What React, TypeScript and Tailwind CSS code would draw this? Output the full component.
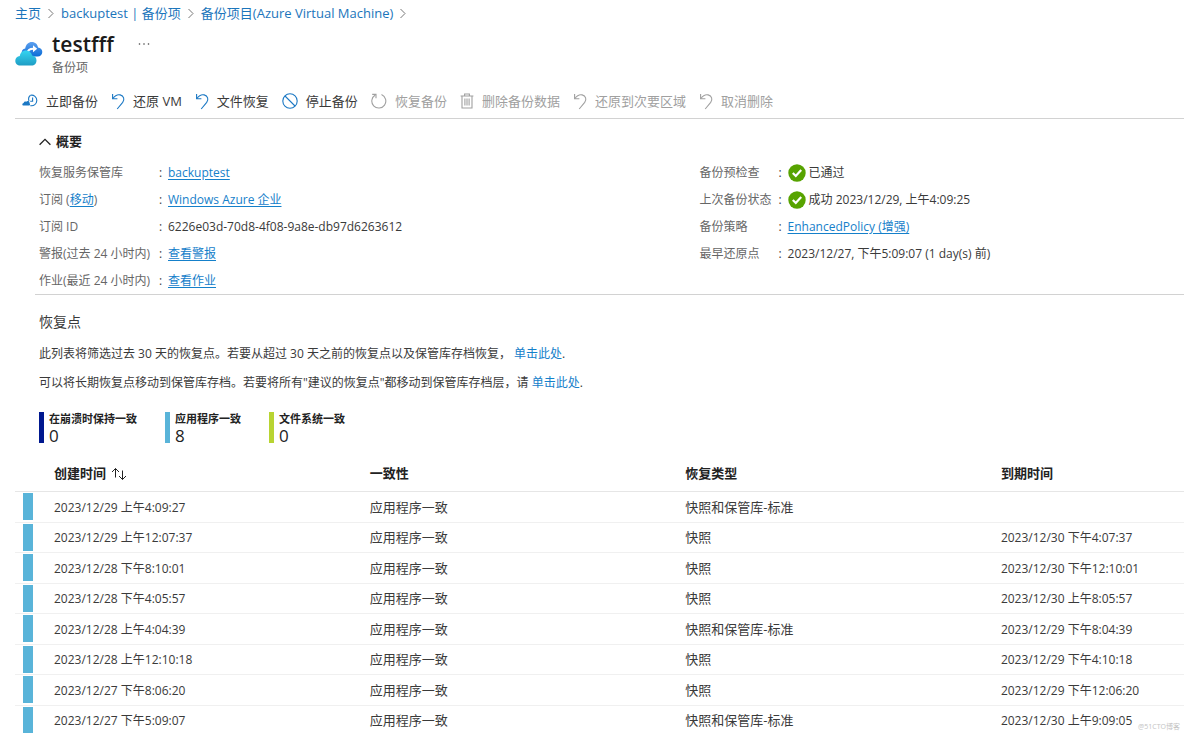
import { FC, ReactNode } from 'react';

type IconName = 'backup' | 'undo' | 'stop' | 'refresh' | 'trash';

interface Command {
  label: string;
  icon: IconName;
  disabled?: boolean;
}

interface RecoveryPoint {
  created: string;
  consistency: string;
  type: string;
  expires?: string;
}

const commands: Command[] = [
  { label: '立即备份', icon: 'backup' },
  { label: '还原 VM', icon: 'undo' },
  { label: '文件恢复', icon: 'undo' },
  { label: '停止备份', icon: 'stop' },
  { label: '恢复备份', icon: 'refresh', disabled: true },
  { label: '删除备份数据', icon: 'trash', disabled: true },
  { label: '还原到次要区域', icon: 'undo', disabled: true },
  { label: '取消删除', icon: 'undo', disabled: true },
];

const legend = [
  { label: '在崩溃时保持一致', count: 0, color: 'bg-[#00188f]' },
  { label: '应用程序一致', count: 8, color: 'bg-[#59b4d9]' },
  { label: '文件系统一致', count: 0, color: 'bg-[#b8d432]' },
];

const points: RecoveryPoint[] = [
  { created: '2023/12/29 上午4:09:27', consistency: '应用程序一致', type: '快照和保管库-标准' },
  { created: '2023/12/29 上午12:07:37', consistency: '应用程序一致', type: '快照', expires: '2023/12/30 下午4:07:37' },
  { created: '2023/12/28 下午8:10:01', consistency: '应用程序一致', type: '快照', expires: '2023/12/30 下午12:10:01' },
  { created: '2023/12/28 下午4:05:57', consistency: '应用程序一致', type: '快照', expires: '2023/12/30 上午8:05:57' },
  { created: '2023/12/28 上午4:04:39', consistency: '应用程序一致', type: '快照和保管库-标准', expires: '2023/12/29 下午8:04:39' },
  { created: '2023/12/28 上午12:10:18', consistency: '应用程序一致', type: '快照', expires: '2023/12/29 下午4:10:18' },
  { created: '2023/12/27 下午8:06:20', consistency: '应用程序一致', type: '快照', expires: '2023/12/29 下午12:06:20' },
  { created: '2023/12/27 下午5:09:07', consistency: '应用程序一致', type: '快照和保管库-标准', expires: '2023/12/30 上午9:09:05' },
];

const CommandIcon: FC<{ name: IconName }> = ({ name }) => {
  const common = { fill: 'none', stroke: 'currentColor', strokeWidth: 1.1, 'aria-hidden': true };
  switch (name) {
    case 'backup':
      return (
        <svg width="16" height="16" viewBox="0 0 16 16" {...common}>
          <path d="M8.600 2.200A5.300 5.300 0 1 1 8.400 12.600" />
          <path d="M10.600 4.400v3.800H8.200" />
          <path d="M8.600 2.200C6.600 3.600 6.200 5.800 7 8" />
          <path
            d="M1.600 12.600C-.2 12.400 0 10.200 1.700 10c.2-1.400 1.500-1.900 2.500-1.200C5.700 7.300 8 8.400 7.500 10.200c1.100.7.600 2.400-.8 2.400z"
            fill="currentColor"
            stroke="none"
          />
        </svg>
      );
    case 'undo':
      return (
        <svg width="14" height="18" viewBox="0 0 14 18" {...common}>
          <path d="M1.600 1v4.800h4.800" />
          <path d="M1.800 5.600C4 2.600 6.600 1.200 9.200 1.900c3.600 1 4.700 4.500 2.500 7.500L6.200 16" />
        </svg>
      );
    case 'stop':
      return (
        <svg width="16" height="16" viewBox="0 0 16 16" {...common}>
          <circle cx="8" cy="8" r="7.200" />
          <path d="M3 3l10 10" />
        </svg>
      );
    case 'refresh':
      return (
        <svg width="16" height="16" viewBox="0 0 16 16" {...common}>
          <path d="M10.500 1.600a7 7 0 1 1-6.200.4" />
          <path d="M1.200 1.400h3.800v3.800" />
        </svg>
      );
    case 'trash':
      return (
        <svg width="14" height="16" viewBox="0 0 14 16" {...common}>
          <path d="M.6 3h12.800M4.600 3V1h4.800v2M2 3v12h10V3M4.900 5.400v7.200M7 5.400v7.200M9.100 5.400v7.200" />
        </svg>
      );
  }
};

const BackupItemLogo: FC = () => (
  <svg width="28" height="26" viewBox="0 0 28 26" aria-hidden="true">
    <defs>
      <linearGradient id="cloudBack" x1="0" y1="0" x2="0" y2="1">
        <stop offset="0" stopColor="#5ea0ef" />
        <stop offset="1" stopColor="#0a6cd6" />
      </linearGradient>
      <linearGradient id="cloudFront" x1="0" y1="0" x2="0" y2="1">
        <stop offset="0" stopColor="#35d5f2" />
        <stop offset="1" stopColor="#1f9dc4" />
      </linearGradient>
    </defs>
    <path
      d="M12 15.500C5.500 15.500 5.200 8.300 10.200 7.600 11 3.300 13.500 1 16.800 1c3.400 0 5.800 2.300 6.200 5.400 2.700.3 4.300 2.200 4.300 4.500 0 2.700-2 4.600-4.700 4.600z"
      fill="url(#cloudBack)"
    />
    <path d="M12.500 12c.4-3 2.500-4.400 6.500-4.200" fill="none" stroke="#fff" strokeWidth="2" />
    <path d="M18 4.200l4.200 3.600-4.200 3.500z" fill="#fff" />
    <path
      d="M5.400 24.500C2.300 24.500.3 22.400.3 19.700c0-2.600 1.900-4.500 4.500-4.800C5.300 11.600 7.800 9.400 11 9.400c3.100 0 5.500 2 6.100 5.100 2.600.2 4.400 2.200 4.400 4.900 0 2.900-2.100 5.100-4.900 5.100z"
      fill="url(#cloudFront)"
    />
  </svg>
);

const Crumb: FC<{ children: ReactNode }> = ({ children }) => (
  <li className="flex items-center">
    <a href="#" className="text-[#1b75bb] hover:underline">
      {children}
    </a>
    <svg width="20" height="12" viewBox="0 0 20 12" fill="none" stroke="#777" aria-hidden="true">
      <path d="M7.500 2l4.500 4.500L7.500 11" />
    </svg>
  </li>
);

const Check: FC = () => (
  <svg width="18" height="18" viewBox="0 0 18 18" className="mr-[3px] shrink-0" aria-hidden="true">
    <circle cx="9" cy="9" r="8.700" fill="#57a300" />
    <path d="M4.800 9l3 3 5.400-6" fill="none" stroke="#fff" strokeWidth="2.200" />
  </svg>
);

const ValueLink: FC<{ children: ReactNode }> = ({ children }) => (
  <a href="#" className="text-[#1580ca] underline underline-offset-2">
    {children}
  </a>
);

interface PropertyProps {
  label: ReactNode;
  labelWidth: string;
  children: ReactNode;
}

const Property: FC<PropertyProps> = ({ label, labelWidth, children }) => (
  <div className="flex h-[27px] items-center whitespace-nowrap">
    <dt className={`${labelWidth} shrink-0 text-[#666]`}>{label}</dt>
    <span className="w-[9px] shrink-0 text-[#444]">:</span>
    <dd className="flex items-center">{children}</dd>
  </div>
);

const App: FC = () => {
  return (
    <main
      lang="zh-CN"
      className="relative h-screen overflow-hidden bg-white pl-[15px] font-['Open_Sans','Noto_Sans_CJK_SC',sans-serif] text-xs text-[#3a3a3a]"
    >
      <nav aria-label="breadcrumb">
        <ol className="flex h-[27px] items-center text-[13px]">
          <Crumb>主页</Crumb>
          <Crumb>backuptest | 备份项</Crumb>
          <Crumb>备份项目(Azure Virtual Machine)</Crumb>
        </ol>
      </nav>

      <header className="flex items-center pt-[3px] pb-[7px]">
        <BackupItemLogo />
        <div className="ml-[9px]">
          <div className="flex h-7 items-center">
            <h1 className="text-[21px] leading-7 font-semibold text-[#1b1b1b]">testfff</h1>
            <button type="button" aria-label="更多" className="ml-6 text-[#444]">
              <svg width="12" height="4" viewBox="0 0 12 4" fill="currentColor">
                <circle cx="1.500" cy="2" r=".8" />
                <circle cx="6" cy="2" r=".8" />
                <circle cx="10.500" cy="2" r=".8" />
              </svg>
            </button>
          </div>
          <p className="leading-5 text-[#666]">备份项</p>
        </div>
      </header>

      <div role="toolbar" className="flex h-[34px] items-center gap-[13px] border-b border-[#d2d2d2] pl-[7px] text-[13px]">
        {commands.map((c) => (
          <button
            key={c.label}
            type="button"
            disabled={c.disabled}
            className="flex items-center gap-2 whitespace-nowrap disabled:text-[#a0a0a0]"
          >
            <span className={c.disabled ? 'text-[#a0a0a0]' : 'text-[#1b78c4]'}>
              <CommandIcon name={c.icon} />
            </span>
            {c.label}
          </button>
        ))}
      </div>

      <section className="ml-5 border-b border-[#d2d2d2] pt-[10px] pl-1">
        <button type="button" className="flex h-[26px] items-center gap-[5px] text-[13px] font-bold text-[#222]">
          <svg width="12" height="8" viewBox="0 0 12 8" fill="none" stroke="currentColor" strokeWidth="1.300">
            <path d="M.6 6.800L6 1.400l5.400 5.400" />
          </svg>
          概要
        </button>
        <div className="grid grid-cols-[15fr_11fr] pt-1">
          <dl>
            <Property labelWidth="w-[120px]" label="恢复服务保管库">
              <ValueLink>backuptest</ValueLink>
            </Property>
            <Property
              labelWidth="w-[120px]"
              label={
                <>
                  订阅 (<ValueLink>移动</ValueLink>)
                </>
              }
            >
              <ValueLink>Windows Azure 企业</ValueLink>
            </Property>
            <Property labelWidth="w-[120px]" label="订阅 ID">
              6226e03d-70d8-4f08-9a8e-db97d6263612
            </Property>
            <Property labelWidth="w-[120px]" label="警报(过去 24 小时内)">
              <ValueLink>查看警报</ValueLink>
            </Property>
            <Property labelWidth="w-[120px]" label="作业(最近 24 小时内)">
              <ValueLink>查看作业</ValueLink>
            </Property>
          </dl>
          <dl>
            <Property labelWidth="w-[79px]" label="备份预检查">
              <Check />
              已通过
            </Property>
            <Property labelWidth="w-[79px]" label="上次备份状态">
              <Check />
              成功 2023/12/29, 上午4:09:25
            </Property>
            <Property labelWidth="w-[79px]" label="备份策略">
              <ValueLink>EnhancedPolicy (增强)</ValueLink>
            </Property>
            <Property labelWidth="w-[79px]" label="最早还原点">
              2023/12/27, 下午5:09:07 (1 day(s) 前)
            </Property>
          </dl>
        </div>
      </section>

      <section className="pt-[17px]">
        <div className="pl-6">
          <h2 className="text-sm leading-5">恢复点</h2>
          <p className="mt-3 leading-5">
            此列表将筛选过去 30 天的恢复点。若要从超过 30 天之前的恢复点以及保管库存档恢复，{' '}
            <a href="#" className="text-[#1580ca]">
              单击此处
            </a>
            .
          </p>
          <p className="mt-[9px] leading-5">
            可以将长期恢复点移动到保管库存档。若要将所有"建议的恢复点"都移动到保管库存档层，请{' '}
            <a href="#" className="text-[#1580ca]">
              单击此处
            </a>
            .
          </p>
          <ul className="mt-[19px] flex gap-7">
            {legend.map((item) => (
              <li key={item.label} className="flex h-[31px] gap-[5px] text-[#222]">
                <span className={`w-[5px] ${item.color}`} />
                <div>
                  <div className="text-[11px] leading-[14px] font-bold">{item.label}</div>
                  <div className="text-[17px] leading-[19px]">{item.count}</div>
                </div>
              </li>
            ))}
          </ul>
        </div>

        <table className="mt-[14px] w-full table-fixed border-collapse text-left">
          <colgroup>
            <col className="w-[39px]" />
            <col className="w-[27%]" />
            <col className="w-[27%]" />
            <col className="w-[27%]" />
            <col />
          </colgroup>
          <thead>
            <tr className="h-[34px] border-b border-[#e6e6e6] text-[13px] text-[#222]">
              <th className="p-0" />
              <th className="p-0">
                <button type="button" className="flex items-center gap-[5px] font-bold">
                  创建时间
                  <svg width="16" height="14" viewBox="0 0 16 14" fill="none" stroke="currentColor" aria-hidden="true">
                    <path d="M4.500 10.500V1.500M1 5l3.500-3.500L8 5M11.500 3.500v9M8 9l3.500 3.500L15 9" />
                  </svg>
                </button>
              </th>
              <th className="p-0">一致性</th>
              <th className="p-0">恢复类型</th>
              <th className="p-0">到期时间</th>
            </tr>
          </thead>
          <tbody>
            {points.map((p) => (
              <tr key={p.created} className="border-b border-[#f0f0f0] odd:h-[31px] even:h-[30px]">
                <td className="p-0 pl-2">
                  <div className="h-[27px] w-[10px] bg-[#59b4d9]" />
                </td>
                <td className="p-0 pt-0.5">{p.created}</td>
                <td className="p-0 pt-0.5 text-[13px]">{p.consistency}</td>
                <td className="p-0 pt-0.5 text-[13px]">{p.type}</td>
                <td className="p-0 pt-0.5">{p.expires}</td>
              </tr>
            ))}
          </tbody>
        </table>
      </section>

      <span className="absolute right-1 bottom-0.5 text-[7px] text-[#c4c4c4]">@51CTO博客</span>
    </main>
  );
};

export default App;
